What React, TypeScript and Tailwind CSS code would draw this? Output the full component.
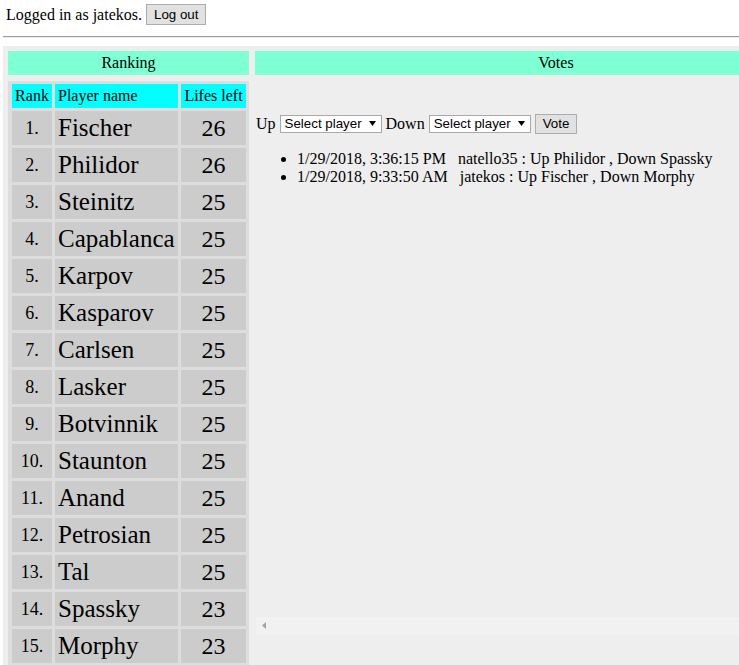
const players = [
  { rank: 1, name: "Fischer", lifes: 26 },
  { rank: 2, name: "Philidor", lifes: 26 },
  { rank: 3, name: "Steinitz", lifes: 25 },
  { rank: 4, name: "Capablanca", lifes: 25 },
  { rank: 5, name: "Karpov", lifes: 25 },
  { rank: 6, name: "Kasparov", lifes: 25 },
  { rank: 7, name: "Carlsen", lifes: 25 },
  { rank: 8, name: "Lasker", lifes: 25 },
  { rank: 9, name: "Botvinnik", lifes: 25 },
  { rank: 10, name: "Staunton", lifes: 25 },
  { rank: 11, name: "Anand", lifes: 25 },
  { rank: 12, name: "Petrosian", lifes: 25 },
  { rank: 13, name: "Tal", lifes: 25 },
  { rank: 14, name: "Spassky", lifes: 23 },
  { rank: 15, name: "Morphy", lifes: 23 },
];

const votes = [
  "1/29/2018, 3:36:15 PM   natello35 : Up Philidor , Down Spassky",
  "1/29/2018, 9:33:50 AM   jatekos : Up Fischer , Down Morphy",
];

function FakeSelect() {
  return (
    <div className="flex h-[18px] w-[102px] items-center justify-between border border-[#a9a9a9] bg-white pl-[4px] pr-[5px] font-['Liberation_Sans',Arial,sans-serif] text-[13.33px] leading-none">
      <span>Select player</span>
      <svg width="7" height="5" viewBox="0 0 7 5">
        <path d="M0 0 L7 0 L3.5 5 Z" fill="#000" />
      </svg>
    </div>
  );
}

function Btn({ label, tall }: { label: string; tall?: boolean }) {
  return (
    <button
      className={
        (tall ? "h-[21px] " : "h-[20px] ") +
        "flex items-center border border-[#adadad] bg-[#e1e1e1] px-[7px] font-['Liberation_Sans',Arial,sans-serif] text-[13.33px] leading-none text-black"
      }
    >
      {label}
    </button>
  );
}

function App() {
  return (
    <div className="h-[665px] w-[739px] overflow-hidden bg-white font-['Liberation_Serif','Times_New_Roman',serif] text-[16px] text-black">
      <div className="mt-[4px] flex h-[21px] items-center gap-[4px] pl-[6px]">
        <span>Logged in as jatekos.</span>
        <Btn label="Log out" tall />
      </div>
      <div className="ml-[3px] mt-[11px] border-t border-b border-t-[#9a9a9a] border-b-[#eeeeee]" />
      <div className="ml-[3px] mt-[8px] flex gap-[6px] bg-[#eeeeee] pl-[5px] pt-[5px]">
        <div className="w-[241px] shrink-0">
          <div className="flex h-[24px] items-center justify-center bg-[#7fffd4]">Ranking</div>
          <div className="mt-[6px] grid grid-cols-[40px_123px_65px] gap-[3px] bg-[#dddddd] pl-[4px] pr-[3px] pt-[3px] pb-[3px]">
            <div className="flex h-[24px] items-center justify-center bg-[#00ffff]">Rank</div>
            <div className="flex h-[24px] items-center bg-[#00ffff] pl-[3px]">Player name</div>
            <div className="flex h-[24px] items-center justify-center bg-[#00ffff]">Lifes left</div>
            {players.map((p) => (
              <div key={p.rank} className="contents">
                <div className="flex h-[34px] items-center justify-center bg-[#cccccc] text-[18px]">{p.rank}.</div>
                <div className="flex h-[34px] items-center bg-[#cccccc] pl-[3px] text-[25px]">{p.name}</div>
                <div className="flex h-[34px] items-center justify-center bg-[#cccccc] text-[24px]">{p.lifes}</div>
              </div>
            ))}
          </div>
        </div>
        <div className="flex h-[583px] w-[602px] shrink-0 flex-col">
          <div className="flex h-[24px] items-center justify-center bg-[#7fffd4]">Votes</div>
          <div className="mt-[39px] flex h-[19px] items-center gap-[4px] pl-[1px]">
            <span>Up</span>
            <FakeSelect />
            <span>Down</span>
            <FakeSelect />
            <Btn label="Vote" />
          </div>
          <ul className="mt-[17px] list-disc pl-[42px] leading-[18px]">
            {votes.map((v, i) => (
              <li key={i} className="whitespace-pre">{v}</li>
            ))}
          </ul>
          <div className="mt-auto ml-[1px] flex h-[17px] items-center bg-[#f1f1f1] pl-[6px]">
            <svg width="4" height="7" viewBox="0 0 4 7">
              <path d="M4 0 L4 7 L0 3.5 Z" fill="#a3a3a3" />
            </svg>
          </div>
        </div>
      </div>
    </div>
  );
}

export default App;
